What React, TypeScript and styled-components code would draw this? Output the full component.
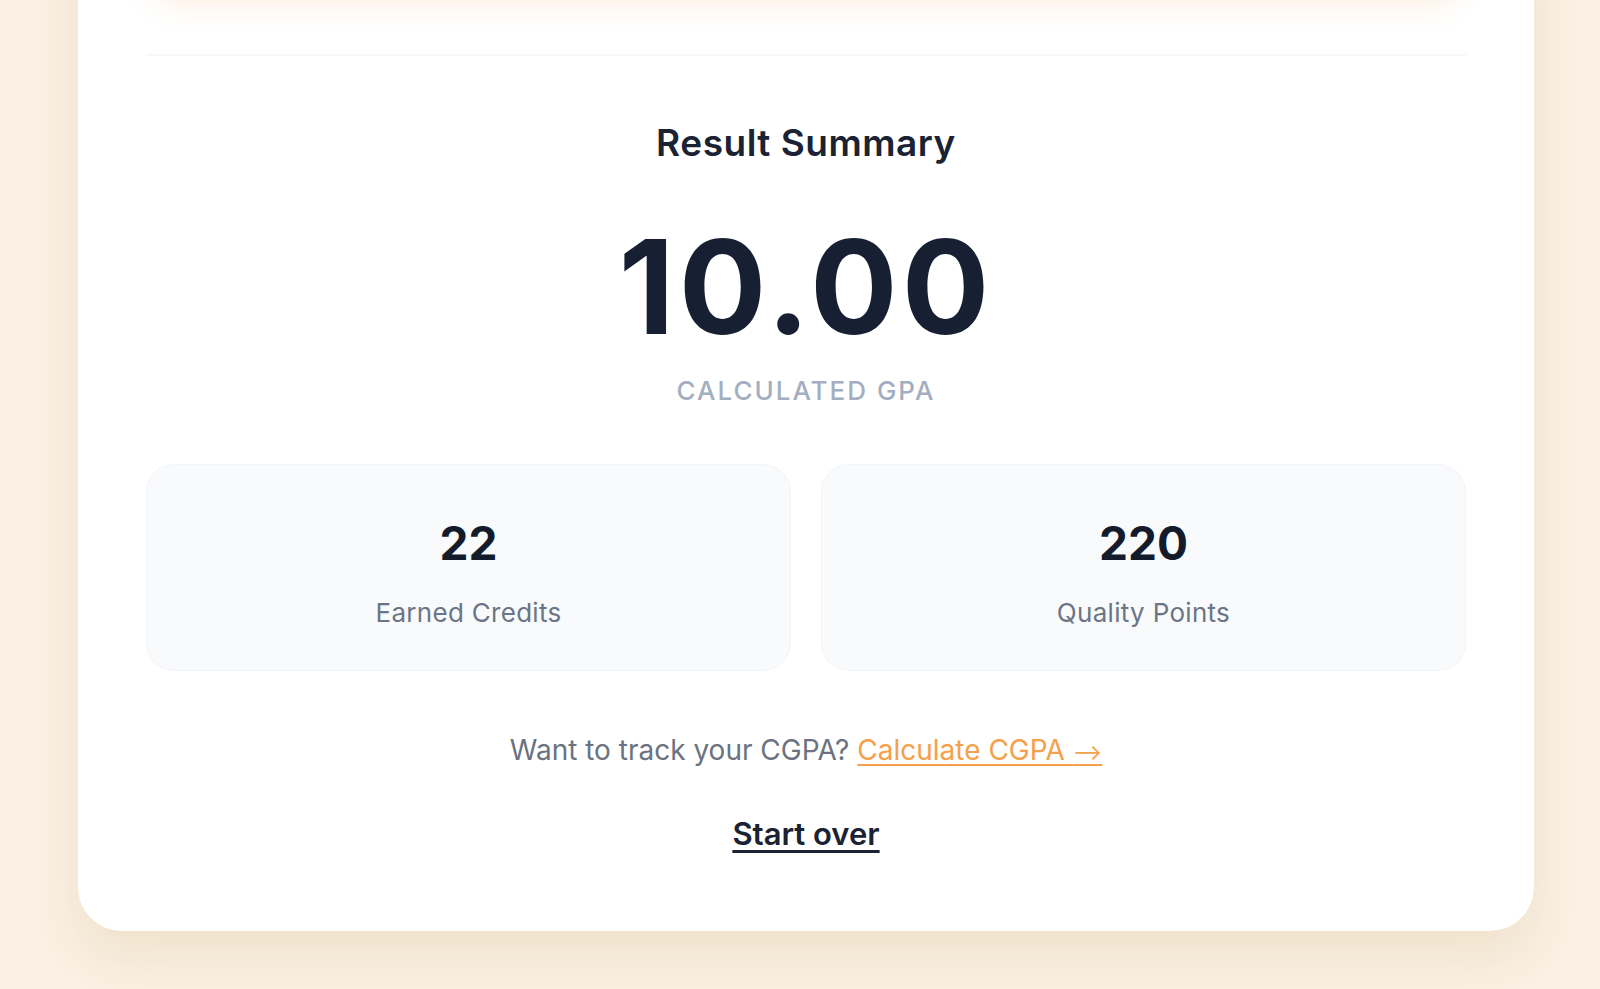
import React from 'react';
import styled, { createGlobalStyle } from 'styled-components';

const GlobalStyle = createGlobalStyle`
    html {
        overflow: hidden;
    }

    html, body {
        margin: 0;
        padding: 0;
        background: #faf1e4;
        font-family: Inter, "Noto Sans", sans-serif;
    }
`;

const stats = [
    { value: '22', label: 'Earned Credits' },
    { value: '220', label: 'Quality Points' },
];

export default function App() {
    return (
        <>
            <GlobalStyle />
            <Page>
                <Card>
                    {/* bottom of the form's submit bar, scrolled above the fold */}
                    <SubmitBar aria-hidden />
                    <Divider />

                    <Summary>
                        <SummaryTitle>Result Summary</SummaryTitle>
                        <GpaValue>10.00</GpaValue>
                        <GpaLabel>Calculated GPA</GpaLabel>
                    </Summary>

                    <StatsGrid>
                        {stats.map((stat) => (
                            <StatBox key={stat.label}>
                                <StatValue>{stat.value}</StatValue>
                                <StatLabel>{stat.label}</StatLabel>
                            </StatBox>
                        ))}
                    </StatsGrid>

                    <CgpaPrompt>
                        Want to track your CGPA?{' '}
                        <CgpaLink href="#">
                            Calculate CGPA <Arrow>⟶</Arrow>
                        </CgpaLink>
                    </CgpaPrompt>

                    <StartOver type="button">Start over</StartOver>
                </Card>
            </Page>
        </>
    );
}

const Page = styled.div`
    display: flow-root;
    height: 989px;
    padding: 0 66px 0 78px;
    box-sizing: border-box;
`;

const Card = styled.div`
    margin-top: -100px;
    background: #ffffff;
    border-radius: 44px;
    padding: 20px 68px 79px;
    display: flex;
    flex-direction: column;
    align-items: center;
    box-shadow: 0 26px 50px rgba(214, 186, 140, 0.28);
`;

const SubmitBar = styled.div`
    align-self: stretch;
    height: 70px;
    margin: 0 10px;
    border-radius: 18px;
    background: #f59e42;
    box-shadow: 0 12px 28px rgba(245, 170, 90, 0.22);
`;

const Divider = styled.hr`
    align-self: stretch;
    margin: 64px 0 0;
    border: none;
    border-top: 2px solid #f8f8f8;
`;

const Summary = styled.div`
    display: flex;
    flex-direction: column;
    align-items: center;
    margin-top: 64px;
`;

const SummaryTitle = styled.h2`
    margin: 0;
    font-size: 37px;
    font-weight: 600;
    color: #1a2234;
    letter-spacing: 0.5px;
`;

const GpaValue = styled.div`
    margin-top: 67px;
    font-size: 130px;
    line-height: 110px;
    font-weight: 700;
    color: #172033;
    letter-spacing: 4px;
`;

const GpaLabel = styled.div`
    margin-top: 33px;
    font-size: 26px;
    font-weight: 500;
    color: #a3aec0;
    text-transform: uppercase;
    letter-spacing: 2px;
`;

const StatsGrid = styled.div`
    align-self: stretch;
    display: grid;
    grid-template-columns: 1fr 1fr;
    gap: 30px;
    margin-top: 58px;
`;

const StatBox = styled.div`
    height: 207px;
    box-sizing: border-box;
    padding-top: 8px;
    border-radius: 28px;
    background: #f8fafc;
    box-shadow: inset 0 0 0 1px #f3f5f8;
    display: flex;
    flex-direction: column;
    align-items: center;
    justify-content: center;
    gap: 27px;
`;

const StatValue = styled.div`
    font-size: 46px;
    font-weight: 700;
    color: #141b2b;
    line-height: 54px;
`;

const StatLabel = styled.div`
    font-size: 26px;
    color: #6b7585;
    letter-spacing: 0.3px;
`;

const CgpaPrompt = styled.p`
    margin: 62px 0 0;
    font-size: 28px;
    color: #6b7280;
`;

const CgpaLink = styled.a`
    color: #f5a04a;
    text-decoration: underline;
    text-underline-offset: 4px;
`;

const Arrow = styled.span`
    font-size: 22px;
`;

const StartOver = styled.button`
    margin-top: 48px;
    padding: 0;
    border: none;
    background: none;
    font: 600 31px Inter, sans-serif;
    color: #1a2234;
    text-decoration: underline;
    text-underline-offset: 5px;
    cursor: pointer;
`;
